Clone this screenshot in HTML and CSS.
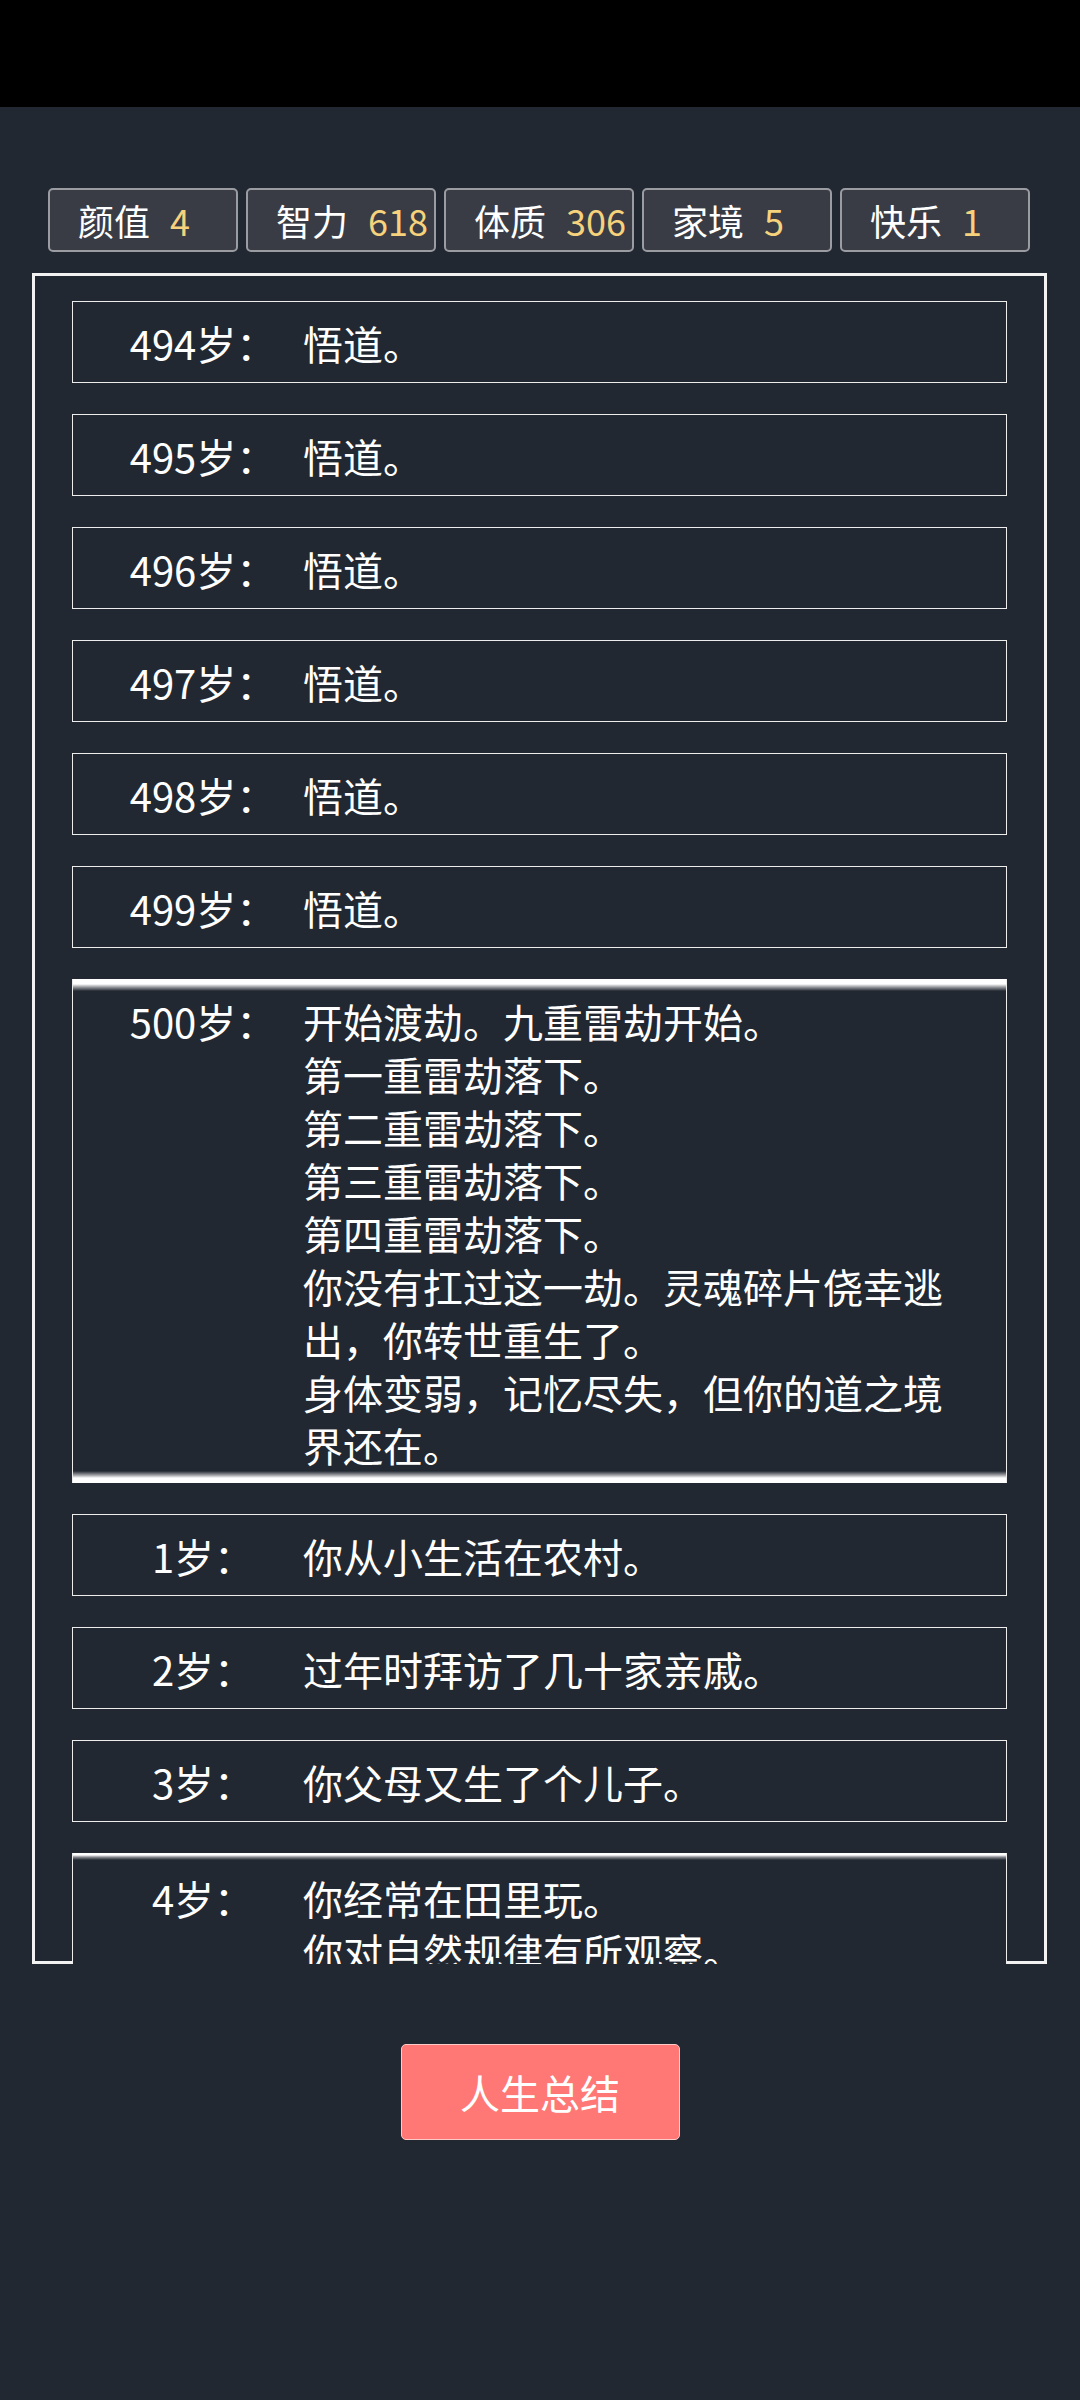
FILE: index.html
```html
<!DOCTYPE html>
<html lang="zh-CN">
<head>
<meta charset="utf-8">
<title>人生重开</title>
<link rel="stylesheet" href="styles.css">
</head>
<body>
<div class="status"></div>
<div class="stats">
  <div class="stat"><span class="k">颜值</span><span class="v">4</span></div>
  <div class="stat"><span class="k">智力</span><span class="v">618</span></div>
  <div class="stat"><span class="k">体质</span><span class="v">306</span></div>
  <div class="stat"><span class="k">家境</span><span class="v">5</span></div>
  <div class="stat"><span class="k">快乐</span><span class="v">1</span></div>
</div>
<div class="frame">
  <div class="list">
    <div class="item"><div class="age">494岁：</div><div class="txt">悟道。</div></div>
    <div class="item"><div class="age">495岁：</div><div class="txt">悟道。</div></div>
    <div class="item"><div class="age">496岁：</div><div class="txt">悟道。</div></div>
    <div class="item"><div class="age">497岁：</div><div class="txt">悟道。</div></div>
    <div class="item"><div class="age">498岁：</div><div class="txt">悟道。</div></div>
    <div class="item"><div class="age">499岁：</div><div class="txt">悟道。</div></div>
    <div class="item hl"><div class="age">500岁：</div><div class="txt">
      <div>开始渡劫。九重雷劫开始。</div>
      <div>第一重雷劫落下。</div>
      <div>第二重雷劫落下。</div>
      <div>第三重雷劫落下。</div>
      <div>第四重雷劫落下。</div>
      <div>你没有扛过这一劫。灵魂碎片侥幸逃出，你转世重生了。</div>
      <div>身体变弱，记忆尽失，但你的道之境界还在。</div>
    </div></div>
    <div class="item"><div class="age">1岁：</div><div class="txt">你从小生活在农村。</div></div>
    <div class="item"><div class="age">2岁：</div><div class="txt">过年时拜访了几十家亲戚。</div></div>
    <div class="item"><div class="age">3岁：</div><div class="txt">你父母又生了个儿子。</div></div>
    <div class="item cur"><div class="age">4岁：</div><div class="txt">
      <div>你经常在田里玩。</div>
      <div>你对自然规律有所观察。</div>
    </div></div>
  </div>
</div>
<div class="actions"><button class="summary">人生总结</button></div>
</body>
</html>
```
FILE: styles.css
```css
html, body {
  margin: 0;
  padding: 0;
}
body {
  background: #222831;
  color: #ffffff;
  font-family: "Noto Sans CJK SC", "Noto Sans", sans-serif;
  min-height: 2400px;
}
.status {
  height: 107px;
  background: #000000;
}
.stats {
  display: flex;
  gap: 8px;
  padding: 81px 0 0 48px;
}
.stat {
  width: 190px;
  height: 64px;
  box-sizing: border-box;
  background: #393c45;
  border: 2px solid #9a9ca2;
  border-radius: 5px;
  display: flex;
  align-items: center;
  padding-left: 28px;
  font-size: 36px;
  line-height: 1;
}
.v {
  color: #f5d27b;
  margin-left: 20px;
}
.frame {
  margin: 21px 33px 0 32px;
  border: 3px solid #f2f2f2;
}
.list {
  height: 1688px;
  margin-bottom: -3px;
  position: relative;
  overflow: hidden;
  box-sizing: border-box;
  padding: 25px 37px 0;
  display: flex;
  flex-direction: column;
  gap: 31px;
}
.item {
  flex-shrink: 0;
  display: flex;
  border: 1px solid #ededed;
  background: #222831;
  padding: 15px 40px 12px 30px;
  font-size: 40px;
  line-height: 53px;
}
.age {
  width: 200px;
  flex-shrink: 0;
  text-align: center;
}
.txt {
  flex: 1;
  min-width: 0;
}
.item.hl {
  border-top: 0;
  border-bottom: 0;
  padding-top: 16px;
  padding-bottom: 11px;
  background: linear-gradient(to bottom,
    #ffffff 0, #ffffff 5px, #9a9ca1 8px, #222831 12px,
    #222831 calc(100% - 12px), #9a9ca1 calc(100% - 8px),
    #ffffff calc(100% - 5px), #ffffff 100%);
}
.item.cur {
  border-top: 0;
  padding-top: 19px;
  background: linear-gradient(to bottom,
    #ffffff 0, #ffffff 2px, #8d9096 4px, #222831 7px, #222831 100%);
}
.actions {
  display: flex;
  justify-content: center;
  margin-top: 80px;
}
.summary {
  width: 279px;
  height: 96px;
  padding: 0;
  background: #ff7876;
  border: 1px solid #ffc9c7;
  border-radius: 5px;
  color: #ffffff;
  font-family: inherit;
  font-size: 40px;
  line-height: 1;
}
```
